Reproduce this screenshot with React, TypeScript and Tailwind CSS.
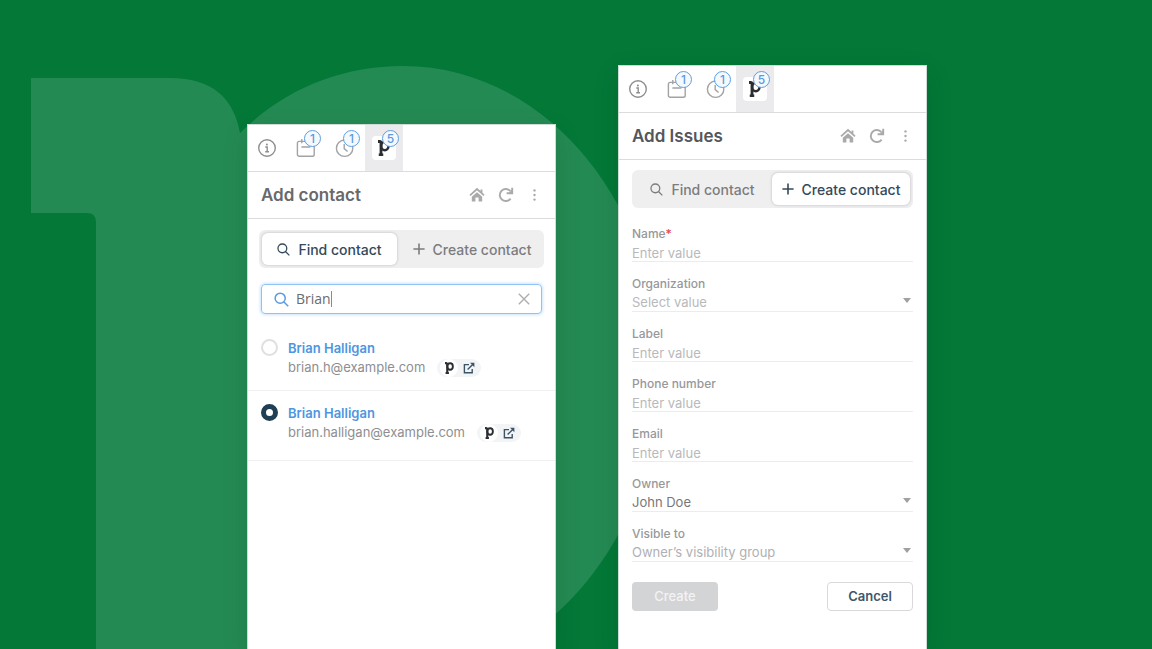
import { useState } from "react";
import type { ReactNode } from "react";

function BackdropMark() {
  return (
    <svg
      className="pointer-events-none absolute top-0 -left-[247px] h-[1000px] w-[680px]"
      viewBox="0 0 680 1000"
      fill="#248a53"
      aria-hidden="true"
    >
      <path d="M31 78H170C212 78 234 98 240 133C283 90 340 66 403 66C544 66 659 202 659 370C659 538 544 674 403 674V1000H96V222Q96 213 87 213H31Z" />
    </svg>
  );
}

function BrandMark({ className }: { className: string }) {
  return (
    <svg viewBox="0 0 24 32" className={className} fill="none" aria-hidden="true">
      <path d="M0 3H3.5Q6 3 6 7V32" stroke="#2b2d33" strokeWidth="5.6" />
      <path d="M1.5 29.4H10.5" stroke="#2b2d33" strokeWidth="5" />
      <ellipse cx="13.6" cy="12" rx="7.4" ry="8.6" stroke="#2b2d33" strokeWidth="5" />
    </svg>
  );
}

function InfoIcon() {
  return (
    <svg viewBox="0 0 20 20" className="size-5" fill="none" stroke="#8f8f92" strokeWidth="1.4" aria-hidden="true">
      <circle cx="10" cy="10" r="8.3" />
      <circle cx="9.9" cy="6.4" r="1" fill="#8f8f92" stroke="none" />
      <path d="M8.3 9H10.2V13.6M8.2 13.8H12" />
    </svg>
  );
}

function CalendarIcon() {
  return (
    <svg viewBox="0 0 20 20" className="size-5" fill="none" stroke="#a3a3a6" strokeWidth="1.4" aria-hidden="true">
      <rect x="1.4" y="3.4" width="16.8" height="14.8" rx="1.8" />
      <path d="M5.8 1V5.2M13.8 1V5.2M5.4 9H14.4" />
    </svg>
  );
}

function ClockIcon() {
  return (
    <svg viewBox="0 0 20 20" className="size-5" fill="none" stroke="#a3a3a6" strokeWidth="1.4" aria-hidden="true">
      <circle cx="9.6" cy="10.2" r="8.2" />
      <path d="M9.2 6V10.6L12.6 13.6" />
    </svg>
  );
}

function HomeIcon() {
  return (
    <svg viewBox="0 0 16 16" className="size-4" fill="#aaaaab" aria-hidden="true">
      <path d="M1 8.4L8 2L15 8.4" fill="none" stroke="#aaaaab" strokeWidth="1.7" />
      <path d="M11.5 2.6H13.4V6.8L11.5 5Z" />
      <path d="M8 5.2L13.2 9.8V14.6H9.6V10.6H6.4V14.6H2.8V9.8Z" />
    </svg>
  );
}

function RefreshIcon() {
  return (
    <svg viewBox="0 0 16 16" className="size-4" fill="none" stroke="#aaaaab" strokeWidth="1.9" aria-hidden="true">
      <path d="M12.6 11.6A6 6 0 1 1 12.4 4.2" />
      <path d="M14.2 .8V6.2H8.6" />
      <path d="M10.8 6L14 2.6V6Z" fill="#aaaaab" stroke="none" />
    </svg>
  );
}

function DotsIcon() {
  return (
    <svg viewBox="0 0 16 16" className="size-4" fill="#aaaaab" aria-hidden="true">
      <circle cx="7.5" cy="3.4" r="1.2" />
      <circle cx="7.5" cy="8" r="1.2" />
      <circle cx="7.5" cy="12.6" r="1.2" />
    </svg>
  );
}

function SearchIcon({ className }: { className: string }) {
  return (
    <svg viewBox="0 0 16 16" className={className} fill="none" stroke="currentColor" strokeWidth="1.6" aria-hidden="true">
      <circle cx="6.6" cy="6.6" r="5.4" />
      <path d="M10.4 10.4L15.2 15.2" />
    </svg>
  );
}

function PlusIcon() {
  return (
    <svg viewBox="0 0 12 12" className="size-3" fill="none" stroke="currentColor" strokeWidth="1.6" aria-hidden="true">
      <path d="M6 .4V11.6M.4 6H11.6" />
    </svg>
  );
}

function OpenIcon() {
  return (
    <svg viewBox="0 0 12 12" className="size-3" fill="none" stroke="#3a5468" strokeWidth="1.4" aria-hidden="true">
      <path d="M6 2.6H1.4V10.8H9.2V7M4.6 7.6L10 2.2" />
      <path d="M7 .8H11.4V5.2Z" fill="#3a5468" stroke="none" />
    </svg>
  );
}

function Badge({ children }: { children: ReactNode }) {
  return (
    <span className="absolute top-[5px] right-1 flex size-[17px] items-center justify-center rounded-full border border-[#5c9ee3] bg-[#f4f9fe] text-[12px] leading-none font-medium text-[#5b9bdf]">
      {children}
    </span>
  );
}

const tabClass = "relative flex w-[38px] items-center justify-center";

function ToolTabs() {
  return (
    <nav className="flex h-[47px] gap-px border-b border-[#dcdcde]" aria-label="Tools">
      <button type="button" aria-label="Info" className={tabClass}>
        <InfoIcon />
      </button>
      <button type="button" aria-label="Calendar" className={tabClass}>
        <CalendarIcon />
        <Badge>1</Badge>
      </button>
      <button type="button" aria-label="History" className={tabClass}>
        <ClockIcon />
        <Badge>1</Badge>
      </button>
      <button type="button" aria-label="Deals" className="relative flex w-[38px] items-center justify-center bg-[#ebebed]">
        <span className="flex size-6 items-center justify-center rounded-sm bg-white">
          <BrandMark className="h-4 w-3" />
        </span>
        <Badge>5</Badge>
      </button>
    </nav>
  );
}

function TitleBar({ title, tone }: { title: string; tone: string }) {
  return (
    <header className="flex h-[47px] items-center justify-between border-b border-[#dcdcde] pr-3 pl-[13px]">
      <h2 className={`text-[17px] leading-6 font-semibold ${tone}`}>{title}</h2>
      <div className="flex items-center gap-[13px]">
        <button type="button" aria-label="Home">
          <HomeIcon />
        </button>
        <button type="button" aria-label="Refresh">
          <RefreshIcon />
        </button>
        <button type="button" aria-label="More">
          <DotsIcon />
        </button>
      </div>
    </header>
  );
}

function ModeSwitch({ mode }: { mode: "find" | "create" }) {
  const base = "flex h-8 items-center justify-center gap-2 rounded-md text-[14px] font-medium";
  const on = "bg-white text-[#34495b] shadow-[0_0_2px_1px_#d5d5d7]";
  const off = "text-[#7c7c7f]";
  return (
    <div className="flex h-[38px] items-center justify-between rounded-md bg-[#efeff0] px-[3px]">
      <button type="button" className={`${base} w-[135px] ${mode === "find" ? on : off}`}>
        <SearchIcon className="size-[13px]" />
        Find contact
      </button>
      <button type="button" className={`${base} w-[138px] ${mode === "create" ? on : off}`}>
        <PlusIcon />
        Create contact
      </button>
    </div>
  );
}

function ContactRow({
  id,
  email,
  checked,
  onSelect,
}: {
  id: string;
  email: string;
  checked: boolean;
  onSelect: () => void;
}) {
  return (
    <li className="flex gap-[10px] border-b border-[#f0f0f1] pt-[13px] pr-3 pb-[11px] pl-[13px] last:pb-4">
      <input
        id={id}
        type="radio"
        name="contact"
        checked={checked}
        onChange={onSelect}
        className="size-[17px] shrink-0 appearance-none rounded-full border-2 border-[#e0e0e2] bg-white checked:border-[5px] checked:border-[#213f54]"
      />
      <div>
        <label htmlFor={id} className="block text-[13px] leading-[18px] font-semibold text-[#4e96e0]">
          Brian Halligan
        </label>
        <div className="flex h-[22px] items-center gap-3 text-[13px] text-[#8e8e91]">
          {email}
          <a
            href="#contact"
            aria-label="Open contact"
            className="flex h-[18px] items-center gap-[5px] rounded-full bg-[#f3f4f6] pr-[6px] pl-[3px]"
          >
            <span className="flex size-[18px] items-center justify-center rounded-full bg-white">
              <BrandMark className="h-3 w-[9px]" />
            </span>
            <OpenIcon />
          </a>
        </div>
      </div>
    </li>
  );
}

function FindPanel() {
  const [query, setQuery] = useState("Brian");
  const [picked, setPicked] = useState("second");
  return (
    <section className="relative mt-[124px] border border-b-0 border-[#cfdcd5] bg-white shadow-[0_8px_24px_rgba(0,50,20,0.14)]">
      <ToolTabs />
      <TitleBar title="Add contact" tone="text-[#68696c]" />
      <div className="px-[11px] pt-[11px]">
        <ModeSwitch mode="find" />
      </div>
      <div className="px-[13px] pt-4">
        <div className="flex h-[30px] items-center rounded border border-[#8fc3f3] pr-[11px] pl-3 text-[#5b9bdf] shadow-[0_0_3px_1px_#cde5fb]">
          <SearchIcon className="size-[15px]" />
          <input
            type="text"
            aria-label="Search contacts"
            value={query}
            onChange={(e) => setQuery(e.target.value)}
            className="ml-[7px] field-sizing-content font-['Open_Sans',sans-serif] text-[14px] leading-5 text-[#6b6b6e] caret-transparent outline-none"
          />
          <span className="h-4 w-px bg-[#8b8b8e]" />
          <button type="button" aria-label="Clear" onClick={() => setQuery("")} className="ml-auto">
            <svg viewBox="0 0 12 12" className="size-3" fill="none" stroke="#aeaeb0" strokeWidth="1.4">
              <path d="M.8 .8L11.2 11.2M11.2 .8L.8 11.2" />
            </svg>
          </button>
        </div>
      </div>
      <ul className="mt-3">
        <ContactRow id="c1" email="brian.h@example.com" checked={picked === "first"} onSelect={() => setPicked("first")} />
        <ContactRow
          id="c2"
          email="brian.halligan@example.com"
          checked={picked === "second"}
          onSelect={() => setPicked("second")}
        />
      </ul>
    </section>
  );
}

const controlClass =
  "h-5 w-full appearance-none border-b border-[#ececee] bg-transparent pt-[2px] text-[13px] leading-[17px] outline-none placeholder:text-[#b9b9bb]";

function TextField({ id, label, required }: { id: string; label: string; required?: boolean }) {
  return (
    <div>
      <label htmlFor={id} className="block text-[12px] leading-4 font-medium text-[#98989b]">
        {label}
        {required && <span className="text-[#e5484d]">*</span>}
      </label>
      <input id={id} placeholder="Enter value" className={`block ${controlClass}`} />
    </div>
  );
}

function SelectField({ id, label, value, tone }: { id: string; label: string; value: string; tone: string }) {
  return (
    <div>
      <label htmlFor={id} className="block text-[12px] leading-4 font-medium text-[#98989b]">
        {label}
      </label>
      <div className="relative">
        <select id={id} className={`block ${controlClass} ${tone}`}>
          <option>{value}</option>
        </select>
        <svg viewBox="0 0 8 5" className="pointer-events-none absolute top-[6px] right-[2px] h-[5px] w-2" fill="#a0a0a3">
          <path d="M0 0H8L4 5Z" />
        </svg>
      </div>
    </div>
  );
}

function CreatePanel() {
  return (
    <section className="relative mt-[65px] border border-b-0 border-[#cfdcd5] bg-white shadow-[0_8px_24px_rgba(0,50,20,0.14)]">
      <ToolTabs />
      <TitleBar title="Add Issues" tone="text-[#55565a]" />
      <form className="px-[13px] pt-[10px]" onSubmit={(e) => e.preventDefault()}>
        <ModeSwitch mode="create" />
        <div className="mt-[18px] flex flex-col gap-[14px]">
          <TextField id="name" label="Name" required />
          <SelectField id="organization" label="Organization" value="Select value" tone="text-[#b9b9bb]" />
          <TextField id="label" label="Label" />
          <TextField id="phone" label="Phone number" />
          <TextField id="email" label="Email" />
          <SelectField id="owner" label="Owner" value="John Doe" tone="text-[#77777a]" />
          <SelectField id="visible" label="Visible to" value="Owner’s visibility group" tone="text-[#b0b0b3]" />
        </div>
        <div className="mt-5 flex justify-between">
          <button type="submit" className="h-[29px] w-[86px] rounded bg-[#d3d4d6] text-[13px] font-medium text-[#f3f3f4]">
            Create
          </button>
          <button
            type="button"
            className="h-[29px] w-[86px] rounded border border-[#d9d9db] bg-white text-[13px] font-semibold text-[#41566a]"
          >
            Cancel
          </button>
        </div>
      </form>
    </section>
  );
}

export default function App() {
  return (
    <main className="flex min-h-screen justify-center overflow-hidden bg-[#037837] pl-[22px] font-['Inter','Liberation_Sans',sans-serif]">
      <div className="relative grid w-full max-w-[680px] grid-cols-2 gap-[62px]">
        <BackdropMark />
        <FindPanel />
        <CreatePanel />
      </div>
    </main>
  );
}
